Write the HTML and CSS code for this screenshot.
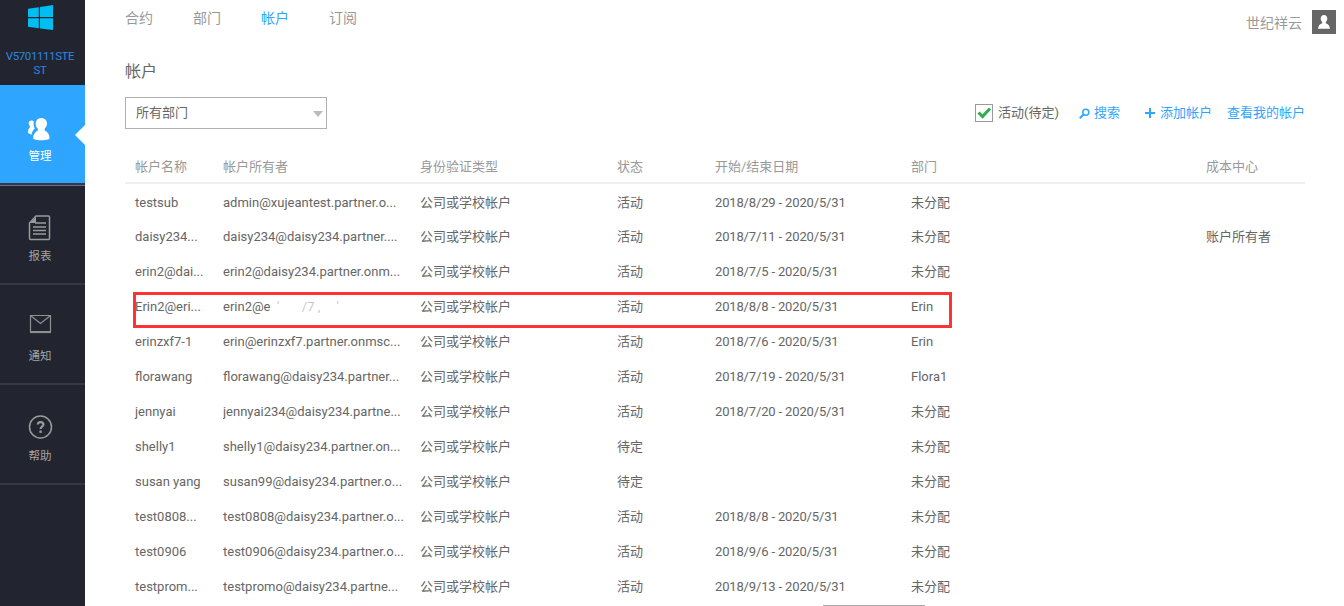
FILE: index.html
```html
<!DOCTYPE html>
<html lang="zh">
<head>
<meta charset="utf-8">
<title>帐户</title>
<link rel="stylesheet" href="styles.css">
</head>
<body>
<div class="app">
  <aside class="sidebar">
    <div class="brand">
      <svg class="brand-logo" width="25" height="25" viewBox="0 0 25 25"><path fill="#00bdf2" d="M0 3.8 10.8 2.3V12H0ZM12 2.1 25 0V12H12ZM0 13.2H10.8V23.3L0 21.8ZM12 13.2H25V25L12 23.4Z"/></svg>
      <div class="brand-name">V5701111STE ST</div>
    </div>
    <nav>
      <a class="nav-item active">
        <svg class="nav-icon" width="41" height="40" viewBox="0 0 41 40"><path fill="#fff" d="M9.500 15.500c-1.700 0-2.800 1.300-2.800 3 0 1.100.5 2 1.200 2.600v1.200C6.500 23.500 6 25.500 6 28l3.500 1.800c.3-2.800 1.500-5 3.300-6.400-.9-1.300-1.300-3-1.200-4.900 0-.8.100-1.500.3-2.100-.5-.5-1.500-.9-2.400-.9Z"/><path fill="#fff" d="M19.300 13c-3.400 0-5.600 2.400-5.600 5.800 0 2.100.8 3.900 2.200 5v1.800c-2.900 1.300-4.600 3.900-4.800 7.400 0 .5.300.9 1 1.200 2.200.7 4.400 1 7 1 2.700 0 5.500-.3 7.500-1 .7-.3 1-.7 1-1.300-.2-3.500-1.800-6.200-4.900-7.500v-1.800c1.400-1.100 2.300-2.900 2.300-5 0-3.300-2.400-5.600-5.700-5.600Z"/></svg>
        <span class="nav-label">管理</span>
      </a>
      <a class="nav-item">
        <svg class="nav-icon" width="41" height="40" viewBox="0 0 41 40" fill="none" stroke="#9a9a9a"><path stroke-width="1.500" d="M14 11h12.500q1 0 1 1v21.500q0 1-1 1h-18q-1 0-1-1V18Z"/><path fill="#9a9a9a" stroke="none" d="M8 18h6v-6Z"/><path stroke-width="1.700" d="M13 18h11M11 22h13M11 25.500h13M11 29h13"/></svg>
        <span class="nav-label">报表</span>
      </a>
      <a class="nav-item">
        <svg class="nav-icon" width="41" height="40" viewBox="0 0 41 40" fill="none" stroke="#8f8f8f"><path stroke-width="1.200" d="M8.500 10.500h20v16h-20ZM8.500 10.500l10 8 10-8"/><path stroke-width="1.200" d="M8 27.500h21"/></svg>
        <span class="nav-label">通知</span>
      </a>
      <a class="nav-item">
        <svg class="nav-icon" width="41" height="40" viewBox="0 0 41 40" fill="none" stroke="#9a9a9a"><circle cx="18.500" cy="22" r="11" stroke-width="1.500"/><path stroke-width="2.200" d="M15.800 19.500c0-3.300 5.600-3.300 5.600 0 0 2.200-2.800 2-2.800 4.400"/><path stroke-width="2.400" d="M18.600 25.500v2.400"/></svg>
        <span class="nav-label">帮助</span>
      </a>
    </nav>
  </aside>
  <main class="main">
    <header class="topbar">
      <div class="tabs">
        <a class="tab">合约</a>
        <a class="tab">部门</a>
        <a class="tab current">帐户</a>
        <a class="tab">订阅</a>
      </div>
      <div class="user">
        <span>世纪祥云</span>
        <span class="avatar"><svg width="24" height="24" viewBox="0 0 24 24"><path fill="#fff" d="M12 5c-2 0-3.300 1.500-3.300 3.600 0 1.500.6 2.700 1.500 3.400v1.200C8 14 6.300 15.500 6 18.800h12c-.3-3.300-2-4.800-4.200-5.600V12c.9-.7 1.500-1.900 1.500-3.400C15.300 6.500 14 5 12 5Z"/></svg></span>
      </div>
    </header>
    <h1 class="title">帐户</h1>
    <div class="toolbar">
      <div class="select">所有部门<i class="caret"></i></div>
      <div class="actions">
        <span class="check">
          <span class="box"><svg width="16" height="16" viewBox="0 0 16 16"><path fill="none" stroke="#2eae4e" stroke-width="3" d="M2.500 7.500 6.500 11.500 14 3.500"/></svg></span>
          活动(待定)
        </span>
        <a class="link search-link"><svg width="11" height="11" viewBox="0 0 11 11" fill="none" stroke="#2ea6ff"><circle cx="6.800" cy="4.200" r="3" stroke-width="1.500"/><path stroke-width="2" d="M4.700 6.300.8 10.200"/></svg>搜索</a>
        <a class="link add-link"><svg width="10" height="10" viewBox="0 0 10 10" stroke="#2ea6ff" stroke-width="2"><path d="M5 0v10M0 5h10"/></svg>添加帐户</a>
        <a class="link">查看我的帐户</a>
      </div>
    </div>
    <table class="accounts">
      <colgroup><col class="c1"><col class="c2"><col class="c3"><col class="c4"><col class="c5"><col class="c6"><col class="c7"></colgroup>
      <thead>
        <tr><th>帐户名称</th><th>帐户所有者</th><th>身份验证类型</th><th>状态</th><th>开始/结束日期</th><th>部门</th><th>成本中心</th></tr>
      </thead>
      <tbody>
        <tr><td>testsub</td><td>admin@xujeantest.partner.o...</td><td>公司或学校帐户</td><td>活动</td><td>2018/8/29 - 2020/5/31</td><td>未分配</td><td></td></tr>
        <tr><td>daisy234...</td><td>daisy234@daisy234.partner....</td><td>公司或学校帐户</td><td>活动</td><td>2018/7/11 - 2020/5/31</td><td>未分配</td><td>账户所有者</td></tr>
        <tr><td>erin2@dai...</td><td>erin2@daisy234.partner.onm...</td><td>公司或学校帐户</td><td>活动</td><td>2018/7/5 - 2020/5/31</td><td>未分配</td><td></td></tr>
        <tr><td>Erin2@eri...</td><td>erin2@e<span class="blur">&nbsp;&nbsp;'&nbsp;&nbsp;&nbsp;&nbsp;&nbsp;&nbsp;&nbsp;/7&nbsp;,&nbsp;&nbsp;&nbsp;&nbsp;&nbsp;'</span></td><td>公司或学校帐户</td><td>活动</td><td>2018/8/8 - 2020/5/31</td><td class="latin">Erin</td><td></td></tr>
        <tr><td>erinzxf7-1</td><td>erin@erinzxf7.partner.onmsc...</td><td>公司或学校帐户</td><td>活动</td><td>2018/7/6 - 2020/5/31</td><td class="latin">Erin</td><td></td></tr>
        <tr><td>florawang</td><td>florawang@daisy234.partner...</td><td>公司或学校帐户</td><td>活动</td><td>2018/7/19 - 2020/5/31</td><td class="latin">Flora1</td><td></td></tr>
        <tr><td>jennyai</td><td>jennyai234@daisy234.partne...</td><td>公司或学校帐户</td><td>活动</td><td>2018/7/20 - 2020/5/31</td><td>未分配</td><td></td></tr>
        <tr><td>shelly1</td><td>shelly1@daisy234.partner.on...</td><td>公司或学校帐户</td><td>待定</td><td></td><td>未分配</td><td></td></tr>
        <tr><td>susan yang</td><td>susan99@daisy234.partner.o...</td><td>公司或学校帐户</td><td>待定</td><td></td><td>未分配</td><td></td></tr>
        <tr><td>test0808...</td><td>test0808@daisy234.partner.o...</td><td>公司或学校帐户</td><td>活动</td><td>2018/8/8 - 2020/5/31</td><td>未分配</td><td></td></tr>
        <tr><td>test0906</td><td>test0906@daisy234.partner.o...</td><td>公司或学校帐户</td><td>活动</td><td>2018/9/6 - 2020/5/31</td><td>未分配</td><td></td></tr>
        <tr><td>testprom...</td><td>testpromo@daisy234.partne...</td><td>公司或学校帐户</td><td>活动</td><td>2018/9/13 - 2020/5/31</td><td>未分配</td><td></td></tr>
      </tbody>
    </table>
    <div class="highlight"></div>
    <div class="scroll-mark"></div>
  </main>
</div>
</body>
</html>
```

FILE: styles.css
```css
* { box-sizing: border-box; }
html, body { margin: 0; height: 100%; overflow: hidden; background: #fff; }
body { font-family: Roboto, "Noto Sans CJK SC", sans-serif; font-size: 13px; color: #666; }
.app { display: flex; height: 606px; overflow: hidden; }

.sidebar { flex: 0 0 85px; background: #22252f; }
.brand { height: 85px; position: relative; text-align: center; }
.brand-logo { display: block; position: absolute; left: 28px; top: 5px; }
.brand-name { padding: 49px 5px 0 0; font-size: 11.500px; letter-spacing: -.4px; line-height: 14px; color: #2d86e0; }
.nav-item { display: block; height: 100px; padding: 20px 5px 0 0; border-bottom: 2px solid #363944; text-align: center; position: relative; }
.nav-icon { display: block; margin-left: 22px; }
.nav-label { display: block; margin-top: 3px; font-size: 11.500px; line-height: 16px; color: #a4a4a4; }
.nav-item.active { background: #2ea6ff; box-shadow: 0 1px 0 #6f717a; }
.nav-item.active .nav-label { color: #fff; }
.nav-item.active::after { content: ""; position: absolute; right: 0; top: 40px; border: 10px solid transparent; border-right-color: #fff; border-left-width: 0; }

.main { flex: 1; position: relative; padding-left: 40px; padding-right: 39px; }
.topbar { display: flex; justify-content: space-between; height: 36px; margin-right: -31px; }
.tabs { display: flex; gap: 40px; padding-top: 8px; font-size: 14px; line-height: 20px; color: #999; }
.tab.current { color: #2ea6ff; }
.user { display: flex; gap: 10px; padding-top: 10px; font-size: 14px; line-height: 27px; color: #999; }
.avatar { display: block; width: 24px; height: 24px; background: #666; }
.avatar svg { display: block; }
.title { margin: 0; padding-top: 26px; height: 61px; font-size: 16px; line-height: 20px; font-weight: 400; color: #666; }

.toolbar { display: flex; justify-content: space-between; align-items: center; height: 32px; }
.select { position: relative; width: 202px; height: 32px; padding-left: 10px; border: 1px solid #b0b0b0; line-height: 30px; }
.caret { position: absolute; right: 3px; top: 13px; border: 5px solid transparent; border-top: 6px solid #bbb; border-bottom: 0; }
.actions { display: flex; align-items: center; line-height: 18px; }
.check { display: flex; align-items: center; gap: 5px; margin-right: 20px; }
.box { display: block; width: 18px; height: 18px; border: 1px solid #999; }
.box svg { display: block; }
.link { color: #2ea6ff; display: flex; align-items: center; }
.search-link { gap: 4px; margin-right: 25px; }
.add-link { gap: 5px; margin-right: 15px; }

.accounts { margin-top: 21px; width: 1180px; table-layout: fixed; border-collapse: collapse; }
.c1 { width: 98px; } .c2 { width: 197px; } .c3 { width: 197px; } .c4 { width: 98px; }
.c5 { width: 196px; } .c6 { width: 295px; } .c7 { width: 99px; }
.accounts th { height: 33px; padding: 0 0 2px; font-weight: 400; text-align: left; color: #999; border-bottom: 2px solid #f0f0f0; }
.accounts td { height: 35px; padding: 0; white-space: nowrap; overflow: hidden; }
.accounts th:first-child, .accounts td:first-child { padding-left: 10px; }
.accounts td:nth-child(1), .accounts td:nth-child(2), .accounts td:nth-child(5), .accounts td.latin { padding-top: 2px; }
.accounts td:nth-child(5) { letter-spacing: -.15px; }
.blur { color: #c8c8c8; }

.highlight { position: absolute; left: 48px; top: 292px; width: 819px; height: 36px; border: 3px solid #f33; }
.scroll-mark { position: absolute; left: 738px; top: 605px; width: 102px; height: 1px; background: #aaa; }
```
